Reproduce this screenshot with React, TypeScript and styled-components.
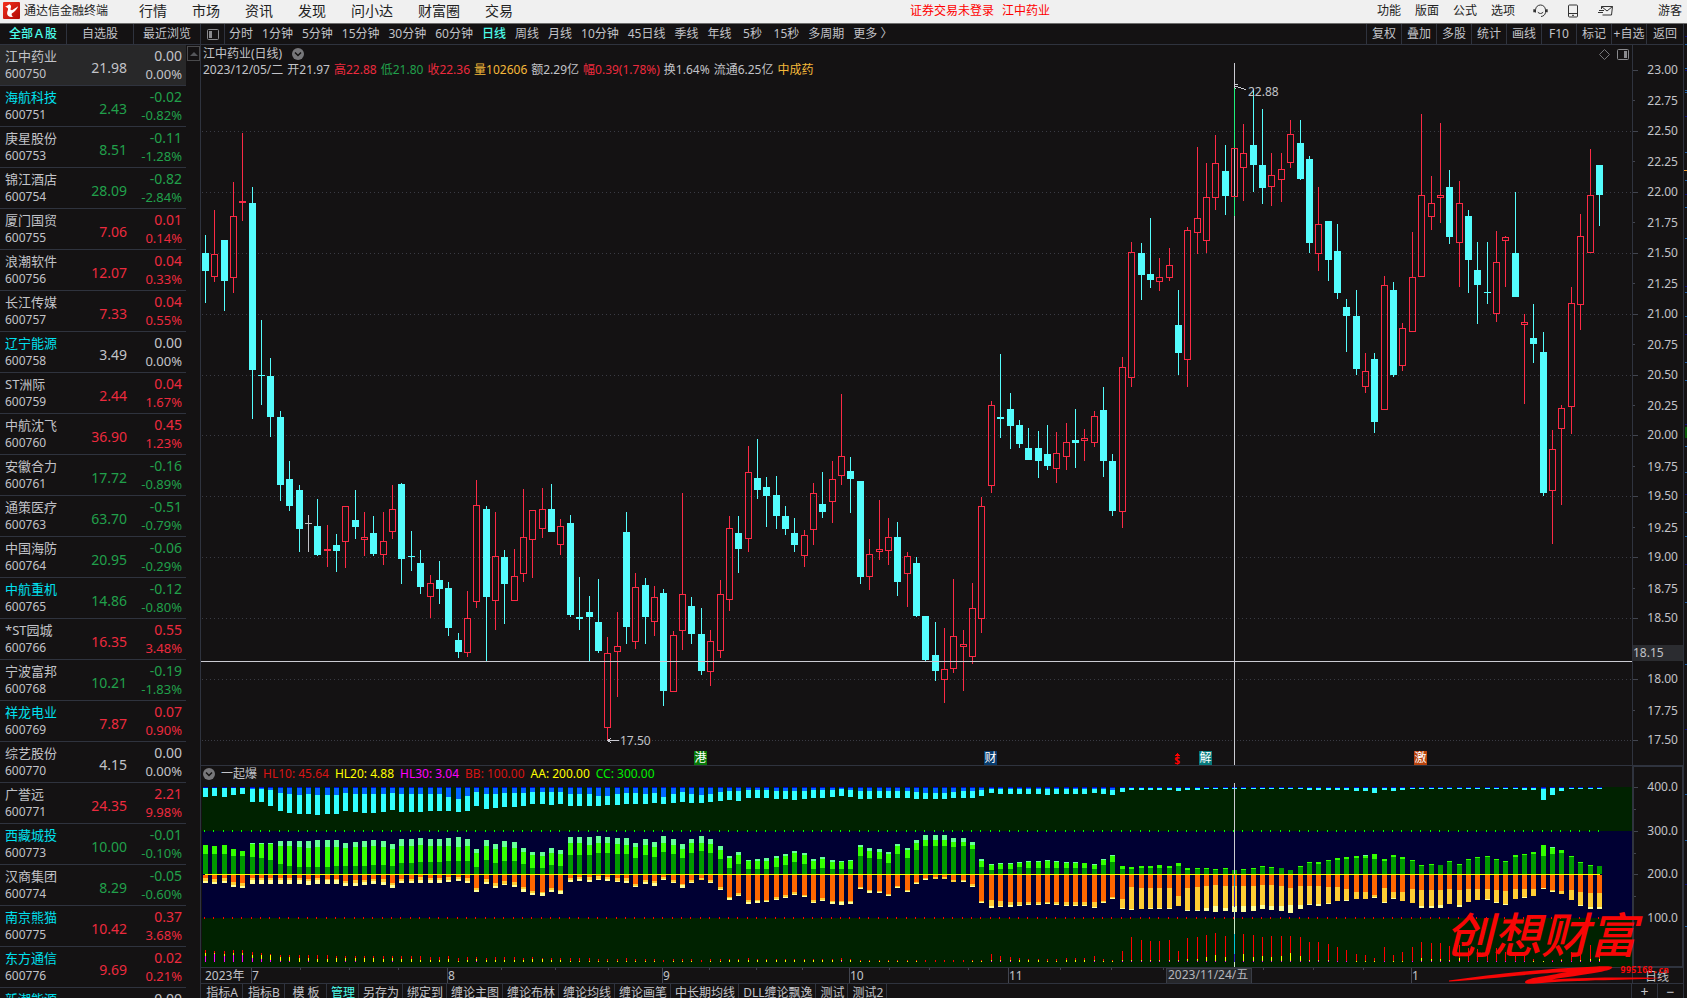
import React from "react";
import styled, { createGlobalStyle } from "styled-components";

const C = {
  bg: "#141213",
  line: "#2f333e",
  text: "#c2c3c8",
  up: "#fb2a45",
  down: "#54fdfd",
  red: "#ec2a3e",
  green: "#21a04b",
  gold: "#f4b93a",
  cyan: "#00e0ee",
  tab: "#4cfbe9",
  cross: "#cbcbd2",
};

const GlobalStyle = createGlobalStyle`
  * { box-sizing: border-box; }
  html, body { margin: 0; padding: 0; background: ${C.bg}; }
  body {
    font-family: "Noto Sans", "Noto Sans CJK SC", sans-serif;
    font-size: 12px;
    line-height: 16px;
    color: ${C.text};
  }
  button {
    font: inherit;
    color: inherit;
    background: none;
    border: 0;
    padding: 0;
    margin: 0;
    white-space: nowrap;
    cursor: pointer;
  }
  svg { display: block; }
`;

/* ---------- shell ---------- */

const Screen = styled.div`
  display: flex;
  flex-direction: column;
  height: 100vh;
  overflow: hidden;
`;

const TopBar = styled.header`
  display: flex;
  align-items: center;
  flex: none;
  height: 24px;
  padding: 0 5px 2px 3px;
  background: #f0f0f0;
  border-bottom: 1px solid #6d6d6d;
  color: #222;
`;

const Brand = styled.div`
  display: flex;
  align-items: center;
  gap: 4px;
  width: 136px;
`;

const Menu = styled.nav`
  display: flex;
  gap: 25px;
  font-size: 14px;
  line-height: 20px;
`;

const Account = styled.div`
  display: flex;
  flex: 1;
  gap: 8px;
  padding-left: 397px;
  color: #ff0000;
`;

const TopTools = styled.div`
  display: flex;
  align-items: center;
  gap: 14px;
`;

const TopIcons = styled.div`
  display: flex;
  align-items: center;
  gap: 20px;
  padding: 0 30px 0 4px;
`;

const Body = styled.div`
  display: flex;
  flex: 1;
  min-height: 0;
`;

/* ---------- stock list ---------- */

const Sidebar = styled.aside`
  flex: none;
  width: 201px;
  border-right: 1px solid ${C.line};
  overflow: hidden;
`;

const ListTabs = styled.div`
  display: grid;
  grid-template-columns: 67px 67px 66px;
  height: 21px;
  border-bottom: 1px solid ${C.line};
`;

const ListTab = styled.button<{ $active?: boolean }>`
  border-right: 1px solid ${C.line};
  color: ${(p) => (p.$active ? C.tab : C.text)};
  font-weight: ${(p) => (p.$active ? 500 : 400)};
  &:last-child { border-right: 0; }
`;

const ListArea = styled.div`
  display: flex;
  align-items: flex-start;
`;

const StockTable = styled.table`
  width: 186px;
  border-spacing: 0;
  table-layout: fixed;
  td { border-bottom: 1px solid ${C.line}; }
`;

const StockRow = styled.tr<{ $active?: boolean }>`
  height: 41px;
  background: ${(p) => (p.$active ? "#282829" : "transparent")};
`;

const NameCell = styled.td`
  width: 70px;
  padding: 0 0 0 5px;
  vertical-align: middle;
`;

const PriceCell = styled.td<{ $color: string }>`
  width: 57px;
  padding: 6px 0 0;
  font-size: 14px;
  line-height: 18px;
  text-align: right;
  color: ${(p) => p.$color};
`;

const ChangeCell = styled.td<{ $color: string }>`
  padding: 0 4px 0 0;
  text-align: right;
  color: ${(p) => p.$color};
`;

const StockName = styled.div<{ $linked?: boolean }>`
  font-size: 13px;
  line-height: 18px;
  white-space: nowrap;
  color: ${(p) => (p.$linked ? C.cyan : C.text)};
`;

const StockCode = styled.div`
  line-height: 18px;
`;

const Change = styled.div`
  font-size: 14px;
  line-height: 18px;
`;

const Percent = styled.div`
  font-size: 13px;
  line-height: 18px;
`;

const ScrollUp = styled.button`
  display: grid;
  place-items: center;
  width: 13px;
  height: 15px;
  margin: 1px 0 0 1px;
  border: 1px solid #4a4a4c;
`;

/* ---------- main area ---------- */

const Main = styled.main`
  display: flex;
  flex-direction: column;
  flex: 1;
  min-width: 0;
`;

const Toolbar = styled.div`
  display: flex;
  flex: none;
  height: 21px;
  border-bottom: 1px solid ${C.line};
`;

const PanelToggle = styled.button`
  display: grid;
  place-items: center;
  width: 24px;
  border-right: 1px solid ${C.line};
`;

const Periods = styled.div`
  display: flex;
  flex: 1;
  gap: 9px;
  padding-left: 4px;
`;

const Period = styled.button<{ $active?: boolean }>`
  min-width: 24px;
  color: ${(p) => (p.$active ? C.tab : C.text)};
  font-weight: ${(p) => (p.$active ? 500 : 400)};
`;

const Tool = styled.button`
  width: 35px;
  border-left: 1px solid ${C.line};
  overflow: hidden;
  &:last-child { width: 37px; }
`;

const ChartRow = styled.section<{ $height: number }>`
  display: flex;
  flex: none;
  position: relative;
  height: ${(p) => p.$height}px;
  border-bottom: 1px solid ${C.line};
`;

const Plot = styled.svg`
  flex: 1;
  min-width: 0;
  height: 100%;
`;

const Axis = styled.svg<{ $boxed?: boolean }>`
  flex: none;
  width: 51px;
  height: 100%;
  border-left: 1px solid ${C.line};
  box-shadow: ${(p) => (p.$boxed ? `inset 0 0 0 1px ${C.line}` : "none")};
`;

const Overlay = styled.div<{ $top: number }>`
  position: absolute;
  top: ${(p) => p.$top}px;
  left: 2px;
`;

const OverlayLine = styled.div<{ $gap: number }>`
  display: flex;
  align-items: center;
  gap: ${(p) => p.$gap}px;
  height: 16px;
  white-space: nowrap;
`;

const Value = styled.span<{ $color?: string }>`
  color: ${(p) => p.$color ?? C.text};
`;

const OverlayRight = styled.div`
  position: absolute;
  top: 4px;
  right: 54px;
  display: flex;
  gap: 7px;
`;

const Watermark = styled.div`
  position: absolute;
  right: 14px;
  bottom: -17px;
  z-index: 1;
  width: 224px;
  color: #f80606;
  pointer-events: none;
`;

const WatermarkTitle = styled.div`
  font-size: 48px;
  font-weight: 500;
  font-style: italic;
  line-height: 62px;
  white-space: nowrap;
`;

const WatermarkUrl = styled.div`
  position: absolute;
  right: 0;
  bottom: 9px;
  font-family: "DejaVu Sans Mono", monospace;
  font-size: 9px;
  font-weight: 700;
  line-height: 10px;
`;

const Footer = styled.footer`
  display: flex;
  flex: none;
  height: 24px;
`;

const FooterTabs = styled.div`
  display: flex;
  flex: 1;
`;

const FooterTab = styled.button<{ $active?: boolean; $wide?: boolean }>`
  min-width: ${(p) => (p.$wide ? 42 : 32)}px;
  padding: 0 3px 6px 4px;
  border-right: 1px solid ${C.line};
  color: ${(p) => (p.$active ? C.tab : C.text)};
`;

const ZoomButton = styled.button`
  width: 26px;
  height: 16px;
  border-left: 1px solid ${C.line};
  font-size: 14px;
  line-height: 14px;
`;

const EdgeStrip = styled.div`
  flex: none;
  width: 4px;
  border-left: 1px solid ${C.line};
  overflow: hidden;
`;

/* ---------- data ---------- */

type Stock = [string, string, string, string, string, boolean?];

const STOCKS: Stock[] = [
  ["江中药业", "600750", "21.98", "0.00", "0.00%"],
  ["海航科技", "600751", "2.43", "-0.02", "-0.82%", true],
  ["庚星股份", "600753", "8.51", "-0.11", "-1.28%"],
  ["锦江酒店", "600754", "28.09", "-0.82", "-2.84%"],
  ["厦门国贸", "600755", "7.06", "0.01", "0.14%"],
  ["浪潮软件", "600756", "12.07", "0.04", "0.33%"],
  ["长江传媒", "600757", "7.33", "0.04", "0.55%"],
  ["辽宁能源", "600758", "3.49", "0.00", "0.00%", true],
  ["ST洲际", "600759", "2.44", "0.04", "1.67%"],
  ["中航沈飞", "600760", "36.90", "0.45", "1.23%"],
  ["安徽合力", "600761", "17.72", "-0.16", "-0.89%"],
  ["通策医疗", "600763", "63.70", "-0.51", "-0.79%"],
  ["中国海防", "600764", "20.95", "-0.06", "-0.29%"],
  ["中航重机", "600765", "14.86", "-0.12", "-0.80%", true],
  ["*ST园城", "600766", "16.35", "0.55", "3.48%"],
  ["宁波富邦", "600768", "10.21", "-0.19", "-1.83%"],
  ["祥龙电业", "600769", "7.87", "0.07", "0.90%", true],
  ["综艺股份", "600770", "4.15", "0.00", "0.00%"],
  ["广誉远", "600771", "24.35", "2.21", "9.98%"],
  ["西藏城投", "600773", "10.00", "-0.01", "-0.10%", true],
  ["汉商集团", "600774", "8.29", "-0.05", "-0.60%"],
  ["南京熊猫", "600775", "10.42", "0.37", "3.68%", true],
  ["东方通信", "600776", "9.69", "0.02", "0.21%", true],
  ["新潮能源", "600777", "2.54", "0.00", "0.00%", true],
];

const trend = (change: string) =>
  change.startsWith("-") ? C.green : Number(change) > 0 ? C.red : C.text;

/* kind (u rise, d fall, f flat), high, body top, body bottom, low */
const CANDLES = `
d 235 253 271 303,u 210 254 277 282,d 240 240 281 311,u 182 216 278 293,u 133 201 203 221,
d 187 203 370 419,d 320 375 376 405,d 358 376 417 437,d 411 417 485 501,d 461 479 506 511,
d 485 490 529 552,f 515 523 524 552,d 499 526 555 556,u 525 549 551 567,d 534 545 551 572,
u 506 506 542 568,d 490 520 527 539,u 512 537 540 556,d 516 533 554 556,u 512 541 555 565,
u 485 509 532 539,d 483 484 559 584,d 531 556 557 571,d 550 563 587 594,u 575 583 597 618,
d 561 580 589 604,d 582 588 628 636,d 633 640 652 658,u 591 618 653 657,u 480 505 602 608,
d 506 509 597 661,u 512 556 601 630,d 550 557 584 624,u 549 576 601 601,u 489 537 574 582,
u 510 510 540 578,u 488 509 529 538,d 484 509 532 532,u 519 526 545 555,d 515 523 615 617,
d 577 617 619 630,d 596 612 617 661,d 579 622 651 653,u 637 653 728 740,u 612 646 652 697,
d 512 532 627 644,u 573 587 642 649,d 578 585 617 644,u 586 597 622 636,d 589 593 691 706,
u 631 635 692 692,u 493 594 631 650,d 597 606 634 644,d 608 634 671 675,u 630 641 672 686,
u 580 594 651 658,u 516 528 600 611,d 516 533 549 573,u 446 472 539 552,d 439 478 490 499,
d 477 487 496 527,d 476 495 516 529,d 506 516 529 535,d 518 533 545 552,u 530 535 556 567,
u 483 493 530 545,d 472 504 512 518,u 461 479 502 523,u 394 456 476 485,d 457 471 479 513,
d 481 481 577 584,u 539 554 577 590,u 500 549 552 560,u 518 537 551 565,d 522 537 582 596,
u 552 556 574 607,d 557 563 616 617,d 616 616 660 661,d 622 655 671 681,u 628 669 680 703,
u 579 636 669 673,u 630 644 647 691,u 583 608 657 664,u 497 506 619 633,u 401 405 486 493,
d 354 417 419 438,d 393 409 426 449,d 420 425 444 448,d 428 448 460 460,d 431 448 461 478,
d 425 454 466 470,u 432 453 469 483,u 423 442 457 470,d 409 440 443 468,u 429 438 441 461,
u 411 416 443 447,d 387 410 461 477,d 454 461 511 516,u 357 367 512 528,u 242 252 378 387,
d 243 253 275 300,d 218 274 280 288,u 258 277 282 291,u 248 265 278 281,d 290 325 353 375,
u 227 230 360 387,u 147 218 233 254,u 163 197 241 253,u 135 163 198 210,d 145 171 196 215,
u 88 148 197 216,u 124 153 168 201,d 89 145 165 192,d 109 165 188 204,u 153 175 187 206,
u 153 169 180 202,u 120 134 163 168,d 120 143 179 180,d 156 159 243 253,u 187 224 254 271,
d 221 221 260 281,d 224 251 293 299,d 299 307 316 352,d 290 316 369 375,u 353 371 387 393,
d 353 359 422 433,u 276 285 410 410,d 282 290 375 377,u 323 328 366 371,u 232 277 332 332,
u 114 195 277 277,u 176 203 217 230,u 123 195 198 223,d 170 187 237 244,u 181 203 243 287,
d 210 216 260 293,d 242 270 285 324,d 242 292 293 304,u 231 262 314 322,u 236 237 241 287,
d 192 253 297 297,u 314 322 325 404,d 304 338 344 363,d 332 352 493 496,u 430 449 491 544,
u 405 408 429 505,u 287 303 407 434,u 214 236 305 330,u 149 195 253 253,d 165 165 195 226`
  .trim()
  .split(",")
  .map((row) => {
    const [kind, ...v] = row.trim().split(" ");
    return { kind, v: v.map(Number) };
  });

const series = (src: string) =>
  src.trim().split(/\s+/).map((cell) => cell.split("/").map(Number));

/* depth of the blue and cyan bars that hang from level 400 */
const HANGING = series(`
0/9 0/8 0/9 0/7 0/6 1/14 1/14 2/18 5/23 6/25 7/26 6/26 7/27 7/26 7/26 5/23 6/24 6/25 6/25 6/24
5/22 6/24 6/24 6/24 6/23 6/23 9/23 11/24 8/23 4/18 6/21 6/20 5/19 5/19 5/18 4/16 4/16 4/17 4/16 6/18
6/18 6/18 8/18 8/17 6/17 5/16 5/16 6/16 5/15 9/16 6/15 4/14 6/15 7/15 6/14 4/13 3/12 3/13 2/10 2/10
2/10 3/11 3/11 3/12 3/11 2/10 2/10 2/9 1/8 2/9 3/11 3/11 3/10 3/10 3/10 3/10 4/11 5/11 5/11 5/11
4/10 3/10 3/10 2/8 1/5 1/6 1/6 1/6 1/6 1/6 1/7 1/6 1/6 1/6 1/6 1/5 1/6 2/7 0/4 0/2
0/2 0/2 0/2 0/2 0/3 0/2 0/2 0/1 0/1 0/1 0/1 0/1 0/1 0/1 0/1 0/1 0/1 0/1 0/2 0/2
0/2 0/2 0/2 0/3 0/3 0/5 0/2 0/3 0/2 0/1 0/1 0/1 0/1 0/1 0/1 0/1 0/1 0/1 0/1 0/1
0/1 0/2 0/2 1/12 0/7 0/3 0/1 0/1 0/1 0/1`);

/* dark, bright and pale green heights above level 200 */
const RISING = series(`
20/29/29 20/28/28 20/29/29 18/25/25 18/23/23 17/30/31 16/30/31 14/30/31 10/28/33 8/28/33
7/27/33 7/26/33 7/27/34 7/27/34 8/27/34 8/26/31 8/27/32 8/27/33 9/28/34 9/27/33
8/25/30 11/28/35 11/28/35 12/29/36 12/28/35 12/28/35 13/28/36 13/27/37 13/28/35 7/21/25
14/28/34 11/25/30 13/27/33 13/26/32 10/22/26 6/19/22 6/18/22 9/21/26 8/20/24 19/31/37
19/31/37 19/29/37 21/31/38 21/31/37 20/30/36 20/29/36 16/27/31 19/29/35 17/27/32 22/31/38
20/29/35 16/25/30 21/31/35 23/31/38 21/30/35 15/24/28 6/16/18 10/19/22 5/13/14 5/13/15
5/13/16 7/16/18 9/18/20 12/21/23 10/19/21 5/13/15 6/15/17 5/12/14 5/12/13 5/13/14
18/27/29 16/23/26 15/22/25 11/20/22 20/28/30 16/24/26 24/31/34 28/34/39 28/34/39 28/34/39
27/32/36 28/32/36 25/29/32 7/13/15 4/9/10 5/10/11 5/10/11 7/11/12 6/12/13 6/12/13
6/13/14 6/12/13 6/11/12 6/11/12 6/11/11 5/9/10 9/14/15 12/18/19 5/8/8 5/7/7
6/8/8 6/8/8 6/9/9 6/8/8 8/11/11 4/6/6 5/6/6 5/6/6 4/5/5 5/6/6
4/4/4 4/5/5 5/6/6 7/8/8 6/7/7 6/6/6 4/4/4 7/8/8 11/12/12 10/12/12
13/14/14 14/16/16 15/17/17 16/18/18 16/18/19 15/20/20 13/15/15 17/19/19 15/17/17 13/14/14
8/9/9 9/10/10 9/9/9 12/13/13 9/10/10 14/15/15 16/17/17 17/18/18 14/15/15 12/13/13
17/19/19 19/20/20 20/22/22 18/29/29 20/26/27 21/24/24 17/18/18 11/12/12 8/9/9 8/8/8`);

/* orange, amber and cream depths below level 200 */
const FALLING = series(`
3/6/8 4/7/9 3/6/8 7/10/12 8/11/13 3/5/9 3/5/9 3/5/9 3/5/9 3/5/9
3/5/9 4/6/10 3/5/9 4/5/9 4/5/9 6/8/11 5/8/11 5/7/10 4/6/9 4/7/10
8/10/13 4/6/8 4/6/8 2/5/8 3/5/8 3/5/8 2/5/7 2/4/6 3/6/8 13/15/17
4/7/9 8/11/13 6/9/10 7/10/12 12/14/17 16/18/20 17/18/21 13/15/17 15/16/19 3/5/7
2/4/6 2/5/7 1/4/5 2/4/6 3/6/7 3/6/8 9/11/12 5/7/9 6/8/11 2/4/5
5/7/8 9/10/13 5/7/8 3/5/5 5/7/8 12/14/15 22/23/25 18/20/21 25/27/29 25/26/28
25/26/27 22/24/25 20/22/23 17/19/20 20/21/22 25/27/28 23/25/26 26/27/29 26/27/30 26/27/29
12/13/14 15/16/18 16/17/18 19/20/21 11/12/13 15/16/17 7/8/9 3/4/5 2/4/4 2/4/4
5/7/7 5/6/7 9/11/12 26/27/28 25/31/33 26/31/32 27/30/32 27/30/31 27/29/30 27/29/30
27/28/29 27/29/30 27/30/31 27/30/31 27/30/31 27/32/33 26/27/28 22/23/24 24/33/34 12/34/35
13/34/34 13/33/34 13/33/34 13/33/34 21/31/31 13/35/36 12/35/36 11/33/36 10/31/37 11/33/36
11/31/37 11/31/37 11/31/36 10/30/34 10/31/35 11/31/36 13/30/38 11/30/34 11/29/30 11/29/31
12/28/29 12/26/26 14/25/26 17/24/24 17/24/24 20/22/23 13/27/28 17/23/24 17/26/26 14/28/28
15/31/33 15/31/33 15/30/33 14/29/29 15/30/32 14/27/27 14/25/25 14/24/25 15/27/28 16/29/30
14/24/24 14/22/23 14/21/21 13/13/14 15/16/17 16/19/19 15/25/25 17/30/31 18/32/34 18/32/34`);

/* red, yellow and magenta spike heights above level 0 */
const SPIKES = series(`
12/9/6 11/9/8 11/8/6 12/9/7 12/9/7 10/7/4 9/7/3 8/7/2 7/5/1 7/5/1
7/4/0 7/4/1 7/3/0 7/3/0 6/4/0 6/4/1 6/4/1 6/4/0 6/4/0 6/3/0
6/4/1 6/3/0 6/3/0 6/2/0 5/2/0 5/2/0 6/3/0 4/1/0 5/2/0 5/3/1
4/2/0 5/2/0 5/2/0 5/2/0 4/2/0 5/3/0 4/3/0 4/2/0 4/2/0 4/1/0
4/1/0 4/1/0 3/1/0 3/1/0 3/1/0 4/1/0 3/1/0 3/1/0 3/1/0 2/0/0
3/1/0 3/1/0 3/1/0 2/0/0 3/1/0 3/1/0 3/2/0 3/2/0 4/2/0 3/2/0
3/2/0 3/2/0 3/2/0 3/2/0 3/2/0 3/2/0 3/2/0 3/2/0 4/2/1 3/2/0
2/1/0 2/1/0 2/1/0 2/1/0 2/1/0 2/1/0 2/1/0 2/0/0 2/0/0 2/0/0
2/0/0 2/0/0 2/1/0 2/1/0 8/2/1 6/2/1 5/2/1 4/2/0 3/2/0 3/2/0
3/1/0 3/1/0 4/2/0 4/2/0 4/2/0 6/2/1 3/1/0 2/1/0 11/2/1 25/2/1
22/2/1 21/2/1 21/2/1 22/2/1 11/2/1 24/3/1 25/3/1 27/5/1 29/7/1 26/5/1
28/8/1 28/8/1 27/5/1 25/6/1 26/5/1 26/6/1 26/9/1 25/6/1 20/2/1 20/2/1
18/2/1 15/1/1 12/1/1 8/1/0 7/1/0 4/1/0 15/1/1 7/1/0 10/1/0 15/1/1
20/4/1 19/3/1 19/3/1 16/2/1 17/4/1 14/1/1 13/1/1 15/1/1 14/1/1 10/1/1
8/1/1 7/1/1 3/1/0 1/1/0 2/1/1 3/2/1 10/1/1 14/2/1 17/3/1 17/3/1`);

const PERIODS = [
  "分时", "1分钟", "5分钟", "15分钟", "30分钟", "60分钟", "日线", "周线", "月线",
  "10分钟", "45日线", "季线", "年线", "5秒", "15秒", "多周期", "更多 〉",
];

const TOOLS = ["复权", "叠加", "多股", "统计", "画线", "F10", "标记", "+自选", "返回"];

const FOOTER_TABS = [
  "指标A", "指标B", "模 板", "管理", "另存为", "绑定到", "缠论主图", "缠论布林",
  "缠论均线", "缠论画笔", "中长期均线", "DLL缠论飘逸", "测试", "测试2",
];

/* ---------- chart geometry ---------- */

const LEFT = 201;
const PRICE_TOP = 45;
const SUB_TOP = 766;
const CROSS_INDEX = 110;

const candleX = (i: number) => 205 + Math.round(i * 9.355);
const priceY = (price: number) => Math.round(740 - (price - 17.5) * 121.82);

const Candle = ({ i }: { i: number }) => {
  const { kind, v } = CANDLES[i];
  const [high, top, bottom, low] = v;
  const x = candleX(i);
  const color = kind === "u" ? C.up : kind === "d" ? C.down : C.text;
  const wick = i === CROSS_INDEX ? "#1ff07c" : color;
  return (
    <g>
      {high < top && <rect x={x} y={high} width={1} height={top - high} fill={wick} />}
      {low > bottom && <rect x={x} y={bottom} width={1} height={low - bottom} fill={wick} />}
      {kind === "u" && bottom - top > 2 ? (
        <rect x={x - 2.5} y={top + 0.5} width={6} height={bottom - top - 1} fill="none" stroke={color} />
      ) : (
        <rect x={x - 3} y={top} width={7} height={bottom - top} fill={color} />
      )}
    </g>
  );
};

const Flag = ({ x, fill, children }: { x: number; fill: string; children: string }) => (
  <g>
    <rect x={x} y={751} width={13} height={14} fill={fill} />
    <text x={x + 6.5} y={762} textAnchor="middle" fill="#fff" fontSize={12}>{children}</text>
  </g>
);

const GRID = Array.from({ length: 11 }, (_, i) => 17.5 + i * 0.5);

const PriceChart = () => (
  <Plot shapeRendering="crispEdges" role="img" aria-label="江中药业日线">
    <g transform={`translate(${-LEFT} ${-PRICE_TOP})`}>
      {GRID.map((p) => (
        <line key={p} x1={202} x2="120%" y1={priceY(p) + 0.5} y2={priceY(p) + 0.5}
          stroke="#3a3b44" strokeDasharray={p === 17.5 ? "1 2" : "1 3"} />
      ))}
      <rect x={candleX(CROSS_INDEX)} y={63} width={1} height={702} fill={C.cross} />
      {CANDLES.map((_, i) => <Candle key={i} i={i} />)}
      <rect x={201} y={661} width="100%" height={1} fill={C.cross} />
      <g stroke={C.cross} fill="none">
        <path d="M1235 84.5h3M1235 86.5h3M1238 87.5h3M1241 88.5h3M1244 89.5h2M1235 88.5h1" />
        <path d="M607 740.5h12M608 739.5h2M608 741.5h2M610 738.5h1M610 742.5h1" />
      </g>
      <text x={1248} y={96} fill={C.text}>22.88</text>
      <text x={620} y={745} fill={C.text}>17.50</text>
      <Flag x={694} fill="#087808">港</Flag>
      <Flag x={984} fill="#073a6c">财</Flag>
      <Flag x={1199} fill="#077a7c">解</Flag>
      <Flag x={1414} fill="#b8430c">激</Flag>
      <path d="M1174 756h6l-3-3z" fill="#ff0000" />
      <text x={1177} y={764} textAnchor="middle" fontSize={10} fontWeight={700} fill="#ff0000">$</text>
    </g>
  </Plot>
);

const PRICES = Array.from({ length: 23 }, (_, i) => 23 - i * 0.25);

const PriceAxis = () => (
  <Axis shapeRendering="crispEdges">
    {PRICES.map((p) => {
      const y = priceY(p) - PRICE_TOP;
      const major = p * 2 === Math.round(p * 2);
      const hidden = p === 18.25;
      return (
        <g key={p}>
          <rect x={0} y={y} width={major ? 5 : 2} height={1} fill="#42454f" />
          {!hidden && (
            <text x={45} y={y + (major ? 4 : 5)} textAnchor="end" fill={C.text}>{p.toFixed(2)}</text>
          )}
        </g>
      );
    })}
    <rect x={0} y={600} width={50} height={16} fill="#2b2c30" />
    <text x={0} y={612} fill={C.text}>18.15</text>
  </Axis>
);

const Stack = ({ x, base, sizes, colors, up, width }: {
  x: number; base: number; sizes: number[]; colors: string[]; up?: boolean; width: number;
}) => (
  <>
    {sizes.map((size, k) => {
      const start = k === 0 ? 0 : sizes[k - 1];
      const length = size - start;
      if (length <= 0) return null;
      return (
        <rect key={k} x={x} width={width} height={length} fill={colors[k]}
          y={up ? base - size : base + start} />
      );
    })}
  </>
);

const IndicatorChart = () => (
  <Plot shapeRendering="crispEdges" role="img" aria-label="一起爆">
    <g transform={`translate(${-LEFT} ${-SUB_TOP})`}>
      <rect x={202} y={787} width="100%" height={44} fill="#002200" />
      <rect x={202} y={831} width="100%" height={87} fill="#000033" />
      <rect x={202} y={918} width="100%" height={49} fill="#002200" />
      {HANGING.map((sizes, i) => {
        const x = candleX(i);
        const [red, yellow, magenta] = SPIKES[i];
        return (
          <g key={i}>
            <rect x={x - 2} y={787} width={5} height={1} fill="#0000cc" />
            <Stack x={x - 2} base={788} width={5} sizes={sizes} colors={["#0066ff", "#33ffff"]} />
            <rect x={x - 1} y={830} width={1} height={2} fill="#00ff00" />
            <Stack x={x - 2} base={874} width={5} up sizes={RISING[i]}
              colors={["#009900", "#33ff00", "#66ff99"]} />
            <Stack x={x - 2} base={875} width={5} sizes={FALLING[i]}
              colors={["#ff6600", "#ffcc33", "#ffff99"]} />
            <rect x={x - 1} y={917} width={1} height={2} fill="#ff0000" />
            <Stack x={x} base={962} width={1} up sizes={[magenta, yellow, red]}
              colors={["#ff00ff", "#ffff00", "#ff0000"]} />
          </g>
        );
      })}
      <rect x={205} y={874} width={1395} height={1} fill="#ffff00" />
      <rect x={1234} y={783} width={1} height={91} fill={C.cross} />
      <rect x={1234} y={875} width={1} height={12} fill="#0090d8" />
      <rect x={1234} y={887} width={1} height={20} fill="#3020c0" />
      <rect x={1234} y={907} width={1} height={60} fill="#c8e8c8" />
      <rect x={1234} y={934} width={1} height={20} fill="#00c8d8" />
      <rect x={1234} y={954} width={1} height={8} fill="#3020c8" />
    </g>
  </Plot>
);

const IndicatorAxis = () => (
  <Axis $boxed shapeRendering="crispEdges">
    {[400, 300, 200, 100].map((level, i) => {
      const y = 21 + Math.round(i * 43.6);
      return (
        <g key={level}>
          <rect x={1} y={y} width={4} height={1} fill="#42454f" />
          {i < 3 && <rect x={1} y={y + 22} width={2} height={1} fill="#42454f" />}
          <text x={45} y={y + 4} textAnchor="end" fill={C.text}>{level.toFixed(1)}</text>
        </g>
      );
    })}
  </Axis>
);

const MONTHS: [number, string][] = [
  [251, "7"], [447, "8"], [662, "9"], [849, "10"], [1008, "11"], [1411, "1"],
];
const WEEKS = [300, 349, 398, 501, 555, 608, 709, 756, 802, 889, 929, 968, 1060, 1111, 1163, 1263, 1313, 1363];

const DateAxis = () => (
  <Plot shapeRendering="crispEdges">
    <g transform={`translate(${-LEFT} -968)`}>
      <text x={205} y={980} fill={C.text}>2023年</text>
      {WEEKS.map((x) => <rect key={x} x={x} y={968} width={1} height={2} fill="#42454f" />)}
      {MONTHS.map(([x, label]) => (
        <g key={x}>
          <rect x={x} y={968} width={1} height={15} fill="#42454f" />
          <text x={x + 1} y={980} fill={C.text}>{label}</text>
        </g>
      ))}
      <rect x={1166} y={968} width={85} height={15} fill="#26272b" stroke="#3a3d46" />
      <text x={1168} y={979} fill="#b4b5ba">2023/11/24/五</text>
    </g>
  </Plot>
);

/* ---------- icons ---------- */

const Logo = () => (
  <svg width="17" height="17" viewBox="0 0 17 17" aria-hidden="true">
    <defs>
      <linearGradient id="brand" x1="0" y1="0" x2="1" y2="1">
        <stop offset="0" stopColor="#f4301c" />
        <stop offset="1" stopColor="#b00c08" />
      </linearGradient>
    </defs>
    <rect width="17" height="17" rx="1" fill="url(#brand)" />
    <path d="M2 5 6.500 2.300C8.600 3.200 8.300 5.300 7.400 7.500L9 8.300 15.200 4.300C13.500 8.600 10.600 10.300 8.800 11.400 8.200 12.900 9 14 10.500 14.600 7 15.500 4.300 14.200 4.100 11.500 4 9.500 5.400 8 5 6.600 4.600 5.500 3.500 5 2 5z" fill="#fff" />
  </svg>
);

const HeadsetIcon = () => (
  <svg width="15" height="14" viewBox="0 0 15 14" fill="none" stroke="#333" aria-hidden="true">
    <path d="M2.500 8.500V5.800C2.800 2.800 4.900 1 7.500 1s4.700 1.800 5 4.800v2.700" />
    <path d="M1.300 5.200v3M13.700 5.200v3" strokeWidth="2" />
    <path d="M4.800 8.200c1.500 1.700 3.900 1.700 5.400 0M12.500 8.500c-.5 2.500-2 3.700-4.500 4" />
  </svg>
);

const PhoneIcon = () => (
  <svg width="10" height="14" viewBox="0 0 10 14" fill="none" stroke="#333" aria-hidden="true">
    <rect x="0.500" y="1" width="9" height="12" rx="1" />
    <path d="M.5 9.500h9M4 11.300h2" />
  </svg>
);

const MailIcon = () => (
  <svg width="16" height="12" viewBox="0 0 16 12" fill="none" stroke="#333" aria-hidden="true">
    <path d="M3.500 4V1.500h11l-1 8.500H4.500M3.500 1.500 9 6l5.500-4.500M1 5.500h5M0 7.500h5" />
  </svg>
);

const CollapseIcon = () => (
  <svg width="12" height="12" viewBox="0 0 12 12" aria-hidden="true">
    <circle cx="6" cy="6" r="6" fill="#77777a" />
    <path d="M3 4.500 6 7.500l3-3" fill="none" stroke="#141213" strokeWidth="1.500" />
  </svg>
);

const SidePanelIcon = ({ side }: { side: "left" | "right" }) => (
  <svg width="12" height="11" viewBox="0 0 12 11" aria-hidden="true">
    <rect x="0.500" y="0.500" width="11" height="10" rx="1" fill="none" stroke="#8a8a8e" />
    <rect x={side === "left" ? 2 : 7} y="2" width="3" height="7" fill="#8a8a8e" />
  </svg>
);

const SwooshMark = styled.svg`
  width: 220px;
  height: 18px;
  margin-left: 4px;
`;

const Swoosh = () => (
  <SwooshMark viewBox="0 0 220 18" fill="#f80606" aria-hidden="true">
    <path d="M0 14.500C45 8 90 3 148 .5c10-.3 17-.5 15 1.500-2 2.200-8 3-12 4-20 3.500-34 5-48 7.500 35-2 68-2.500 112-1.500-30 2-90 2-122 5-8 1-18 1.500-17-1 1-2.500 8-4 14-5 15-2.500 20-3.500 28-5C88 7 40 13 0 15.500z" />
  </SwooshMark>
);

const EDGE_MARKS = [12, 20, 44, 46, 66, 68, 92, 128, 156, 170, 183, 214, 262, 268, 292, 310, 338, 356, 400, 422, 448, 470, 488, 512, 540, 578, 640, 705, 770, 816, 860, 902];

/* ---------- page ---------- */

export default function App() {
  return (
    <Screen>
      <GlobalStyle />
      <TopBar>
        <Brand><Logo /><span>通达信金融终端</span></Brand>
        <Menu>
          {["行情", "市场", "资讯", "发现", "问小达", "财富圈", "交易"].map((item) => (
            <button key={item}>{item}</button>
          ))}
        </Menu>
        <Account>
          <span>证券交易未登录</span>
          <span>江中药业</span>
        </Account>
        <TopTools>
          {["功能", "版面", "公式", "选项"].map((item) => <button key={item}>{item}</button>)}
          <TopIcons>
            <button aria-label="客服"><HeadsetIcon /></button>
            <button aria-label="手机"><PhoneIcon /></button>
            <button aria-label="邮件"><MailIcon /></button>
          </TopIcons>
          <button>游客</button>
        </TopTools>
      </TopBar>

      <Body>
        <Sidebar>
          <ListTabs>
            <ListTab $active>全部Ａ股</ListTab>
            <ListTab>自选股</ListTab>
            <ListTab>最近浏览</ListTab>
          </ListTabs>
          <ListArea>
            <StockTable>
              <tbody>
                {STOCKS.map(([name, code, price, change, pct, linked], i) => (
                  <StockRow key={code} $active={i === 0}>
                    <NameCell>
                      <StockName $linked={linked}>{name}</StockName>
                      <StockCode>{code}</StockCode>
                    </NameCell>
                    <PriceCell $color={trend(change)}>{price}</PriceCell>
                    <ChangeCell $color={trend(change)}>
                      <Change>{change}</Change>
                      <Percent>{pct}</Percent>
                    </ChangeCell>
                  </StockRow>
                ))}
              </tbody>
            </StockTable>
            <ScrollUp aria-label="向上滚动">
              <svg width="8" height="4" viewBox="0 0 8 4"><path d="M0 4 4 0l4 4z" fill="#55565a" /></svg>
            </ScrollUp>
          </ListArea>
        </Sidebar>

        <Main>
          <Toolbar>
            <PanelToggle aria-label="侧栏"><SidePanelIcon side="left" /></PanelToggle>
            <Periods>
              {PERIODS.map((p) => <Period key={p} $active={p === "日线"}>{p}</Period>)}
            </Periods>
            {TOOLS.map((t) => <Tool key={t}>{t}</Tool>)}
          </Toolbar>

          <ChartRow $height={721}>
            <PriceChart />
            <PriceAxis />
            <Overlay $top={1}>
              <OverlayLine $gap={10}>
                <span>江中药业(日线)</span>
                <CollapseIcon />
              </OverlayLine>
              <OverlayLine $gap={4}>
                <Value>2023/12/05/二</Value>
                <Value>开21.97</Value>
                <Value $color={C.red}>高22.88</Value>
                <Value $color={C.green}>低21.80</Value>
                <Value $color={C.red}>收22.36</Value>
                <Value $color={C.gold}>量102606</Value>
                <Value>额2.29亿</Value>
                <Value $color={C.red}>幅0.39(1.78%)</Value>
                <Value>换1.64%</Value>
                <Value>流通6.25亿</Value>
                <Value $color={C.gold}>中成药</Value>
              </OverlayLine>
            </Overlay>
            <OverlayRight>
              <svg width="11" height="11" viewBox="0 0 11 11" aria-hidden="true">
                <path d="M5.500.5l5 5-5 5-5-5z" fill="none" stroke="#77777a" />
              </svg>
              <SidePanelIcon side="right" />
            </OverlayRight>
          </ChartRow>

          <ChartRow $height={202}>
            <IndicatorChart />
            <IndicatorAxis />
            <Overlay $top={0}>
              <OverlayLine $gap={6}>
                <CollapseIcon />
                <Value>一起爆</Value>
                <Value $color="#d81414">HL10: 45.64</Value>
                <Value $color="#ffff00">HL20: 4.88</Value>
                <Value $color="#ff00ff">HL30: 3.04</Value>
                <Value $color="#d81414">BB: 100.00</Value>
                <Value $color="#ffff00">AA: 200.00</Value>
                <Value $color="#00f000">CC: 300.00</Value>
              </OverlayLine>
            </Overlay>
            <Watermark>
              <WatermarkTitle>创想财富</WatermarkTitle>
              <Swoosh />
              <WatermarkUrl>995168.cn</WatermarkUrl>
            </Watermark>
          </ChartRow>

          <ChartRow $height={16}>
            <DateAxis />
            <Axis>
              <text x={12} y={13} fill={C.text}>日线</text>
            </Axis>
          </ChartRow>

          <Footer>
            <FooterTabs>
              {FOOTER_TABS.map((t, i) => (
                <FooterTab key={t} $active={t === "管理"} $wide={i < 3}>{t}</FooterTab>
              ))}
            </FooterTabs>
            <ZoomButton>+</ZoomButton>
            <ZoomButton>−</ZoomButton>
          </Footer>
        </Main>

        <EdgeStrip>
          <svg width="3" height="974" aria-hidden="true">
            {EDGE_MARKS.map((y, i) => (
              <rect key={y} x={1} y={y} width={2} height={1} fill={i % 3 ? "#1f5fa8" : "#10107a"} />
            ))}
            <rect x={0} y={146} width={3} height={1} fill="#f09a30" />
            <rect x={1} y={403} width={2} height={11} fill="#0a5a0a" />
          </svg>
        </EdgeStrip>
      </Body>
    </Screen>
  );
}
